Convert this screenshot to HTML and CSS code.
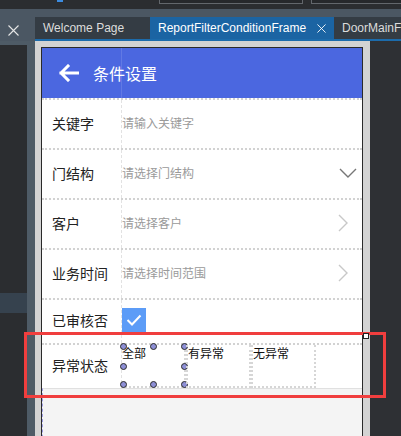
FILE: index.html
```html
<!DOCTYPE html>
<html lang="zh">
<head>
  <meta charset="UTF-8" />
  <title>ReportFilterConditionFrame</title>
  <link rel="stylesheet" href="styles.css">
</head>
<body>
  <div class="toolbar">
    <span class="mark"></span>
    <span class="field field-a"></span>
    <span class="field field-b"></span>
  </div>

  <div class="tabrow">
    <div class="gutter">
      <svg width="11" height="11" viewBox="0 0 11 11"><path d="M0.5 0.5 L10.5 10.5 M10.5 0.5 L0.5 10.5" stroke="#e6e6e6" stroke-width="1.1"/></svg>
    </div>
    <div class="tabs">
      <div class="tab-list">
        <div class="tab">Welcome Page</div>
        <div class="tab active">ReportFilterConditionFrame
          <svg class="tab-close" width="11" height="11" viewBox="0 0 11 11"><path d="M0.5 0.5 L10.5 10.5 M10.5 0.5 L0.5 10.5" stroke="#ffffff" stroke-width="1.1"/></svg>
        </div>
        <div class="tab">DoorMainFrame</div>
      </div>
      <div class="tab-line"></div>
    </div>
  </div>

  <div class="workspace">
    <div class="sidebar">
      <div class="side-dark"><div class="side-sel"></div></div>
      <div class="side-edge"></div>
    </div>

    <div class="canvas">
      <div class="phone">
        <div class="header">
          <svg class="back" width="20" height="18" viewBox="0 0 20 18">
            <path d="M2 9 H19 M9 2 L2 9 L9 16" fill="none" stroke="#fff" stroke-width="3" stroke-linecap="square"/>
          </svg>
          <span class="title">条件设置</span>
        </div>

        <div class="row">
          <div class="label">关键字</div>
          <div class="value"><span class="hint">请输入关键字</span></div>
        </div>
        <div class="row">
          <div class="label">门结构</div>
          <div class="value">
            <span class="hint">请选择门结构</span>
            <svg width="18" height="10" viewBox="0 0 18 10"><path d="M1 1 L9 9 L17 1" fill="none" stroke="#777" stroke-width="1.4"/></svg>
          </div>
        </div>
        <div class="row">
          <div class="label">客户</div>
          <div class="value">
            <span class="hint">请选择客户</span>
            <svg class="more" width="10" height="18" viewBox="0 0 10 18"><path d="M1 1 L9 9 L1 17" fill="none" stroke="#c8c8c8" stroke-width="1.4"/></svg>
          </div>
        </div>
        <div class="row">
          <div class="label">业务时间</div>
          <div class="value">
            <span class="hint">请选择时间范围</span>
            <svg class="more" width="10" height="18" viewBox="0 0 10 18"><path d="M1 1 L9 9 L1 17" fill="none" stroke="#c8c8c8" stroke-width="1.4"/></svg>
          </div>
        </div>
        <div class="row short">
          <div class="label">已审核否</div>
          <div class="value">
            <span class="check">
              <svg width="16" height="12" viewBox="0 0 16 12"><path d="M1.5 6 L6 10.5 L14.5 1.5" fill="none" stroke="#fff" stroke-width="2"/></svg>
            </span>
          </div>
        </div>
        <div class="row short">
          <div class="label">异常状态</div>
          <div class="options">
            <div class="opt selected">全部
              <span class="handle h-tl"></span><span class="handle h-tc"></span><span class="handle h-tr"></span>
              <span class="handle h-ml"></span><span class="handle h-mr"></span>
              <span class="handle h-bl"></span><span class="handle h-bc"></span><span class="handle h-br"></span>
            </div>
            <div class="opt">有异常</div>
            <div class="opt">无异常</div>
          </div>
        </div>
        <div class="empty"></div>
      </div>
    </div>

    <div class="rest"></div>
  </div>

  <div class="annotation"></div>
  <div class="resize-grip"></div>
</body>
</html>
```

FILE: styles.css
```css
* {
  margin: 0;
  padding: 0;
  box-sizing: border-box;
}

body {
  width: 401px;
  height: 436px;
  overflow: hidden;
  position: relative;
  background-color: #2b2d30;
  font-family: "Noto Sans CJK SC", "Noto Sans", sans-serif;
}

/* top toolbar */
.toolbar {
  height: 9px;
  display: flex;
  position: relative;
  background-color: #2b2d30;
}

.mark {
  position: absolute;
  left: 57px;
  top: 0;
  width: 6px;
  height: 2px;
  background-color: #3c8be0;
}

.field {
  position: absolute;
  top: -6px;
  height: 10px;
  border: 1px solid #63676c;
  background-color: #26282b;
}

.field-a { left: 159px; width: 144px; }
.field-b { left: 311px; width: 100px; }

/* tab bar */
.tabrow {
  display: flex;
  height: 32px;
  background-color: #4b5763;
  padding-top: 8px;
}

.gutter {
  width: 35px;
  flex-shrink: 0;
  display: flex;
  justify-content: center;
  align-items: center;
  padding-right: 8px;
  padding-top: 2px;
}

.tabs {
  flex: 1;
  min-width: 0;
  display: flex;
  flex-direction: column;
}

.tab-list {
  display: flex;
  height: 22px;
  overflow: hidden;
}

.tab {
  flex-shrink: 0;
  display: flex;
  align-items: center;
  padding: 0 8px;
  background-color: #343c44;
  color: #dcdcdc;
  font-family: "Liberation Sans", Arial, sans-serif;
  font-size: 12px;
  white-space: nowrap;
}

.tab:first-child {
  width: 115px;
}

.tab.active {
  width: 184px;
  background-color: #1b64a3;
  color: #ffffff;
}

.tab-close {
  margin-left: 11px;
}

.tab-line {
  height: 2px;
  background-color: #1c6bab;
}

/* designer area */
.workspace {
  display: flex;
  height: 400px;
}

.sidebar {
  width: 35px;
  flex-shrink: 0;
  display: flex;
  padding-top: 4px;
  background-color: #4e5b66;
}

.side-dark {
  width: 27px;
  background-color: #2b2d30;
  padding-top: 248px;
}

.side-sel {
  height: 20px;
  background-color: #36424e;
}

.side-edge {
  width: 8px;
}

.canvas {
  width: 335px;
  flex-shrink: 0;
  background-color: #d3d3d3;
  padding: 6px 7px 0 6px;
}

.rest {
  flex: 1;
  background-color: #2e3034;
}

.phone {
  width: 322px;
  height: 400px;
  border: 1px solid #2a2a2a;
  border-bottom: none;
  background-color: #ffffff;
  overflow: hidden;
}

.header {
  height: 50px;
  background-color: #4b67e0;
  display: flex;
  align-items: center;
  padding-left: 17px;
  background-image: linear-gradient(#6179e4, #6179e4);
  background-size: 1px 100%;
  background-position: 79px 0;
  background-repeat: no-repeat;
}

.back {
  margin-right: 14px;
}

.title {
  color: #ffffff;
  font-size: 16px;
  margin-top: -1px;
}

.row {
  height: 50px;
  display: flex;
  border-top: 2px dotted #d2d2d2;
}

.row.short {
  height: 45px;
}

.label {
  width: 80px;
  padding-left: 10px;
  padding-bottom: 3px;
  display: flex;
  align-items: center;
  font-size: 14px;
  color: #222222;
  border-right: 1px dashed #e2e2e2;
}

.value {
  flex: 1;
  display: flex;
  align-items: center;
  justify-content: space-between;
  padding-right: 5px;
  padding-bottom: 3px;
}

.hint {
  font-size: 12px;
  color: #9a9a9a;
}

.more {
  margin-right: 9px;
}

.check {
  width: 24px;
  height: 24px;
  background-color: #5c9cf7;
  display: flex;
  justify-content: center;
  align-items: center;
}

.options {
  flex: 1;
  display: flex;
}

.opt {
  position: relative;
  width: 65px;
  height: 43px;
  border: 2px dotted #d6d6d6;
  border-top: none;
  font-size: 12px;
  line-height: 14px;
  padding-top: 1px;
  color: #111111;
}

.opt.selected {
  width: 64px;
  border-left: none;
}

.handle {
  position: absolute;
  width: 7px;
  height: 7px;
  border-radius: 50%;
  border: 1px solid #2a2a2a;
  background-color: #8d8fd6;
}

.h-tl { left: -2px; top: -2px; }
.h-tc { left: 28px; top: -2px; }
.h-tr { right: -4px; top: -2px; }
.h-ml { left: -2px; top: 18px; }
.h-mr { right: -4px; top: 18px; }
.h-bl { left: -2px; bottom: -2px; }
.h-bc { left: 28px; bottom: -2px; }
.h-br { right: -4px; bottom: -2px; }

.empty {
  height: 60px;
  background-color: #f4f4f4;
  border-top: 1px solid #e0e0e0;
  border-left: 1px dashed #9a9ae0;
}

/* overlays */
.annotation {
  position: absolute;
  left: 24px;
  top: 332px;
  width: 362px;
  height: 66px;
  border: 3px solid #f03e3e;
}

.resize-grip {
  position: absolute;
  left: 363px;
  top: 333px;
  width: 6px;
  height: 6px;
  background-color: #ffffff;
  border: 1px solid #222222;
}
```
